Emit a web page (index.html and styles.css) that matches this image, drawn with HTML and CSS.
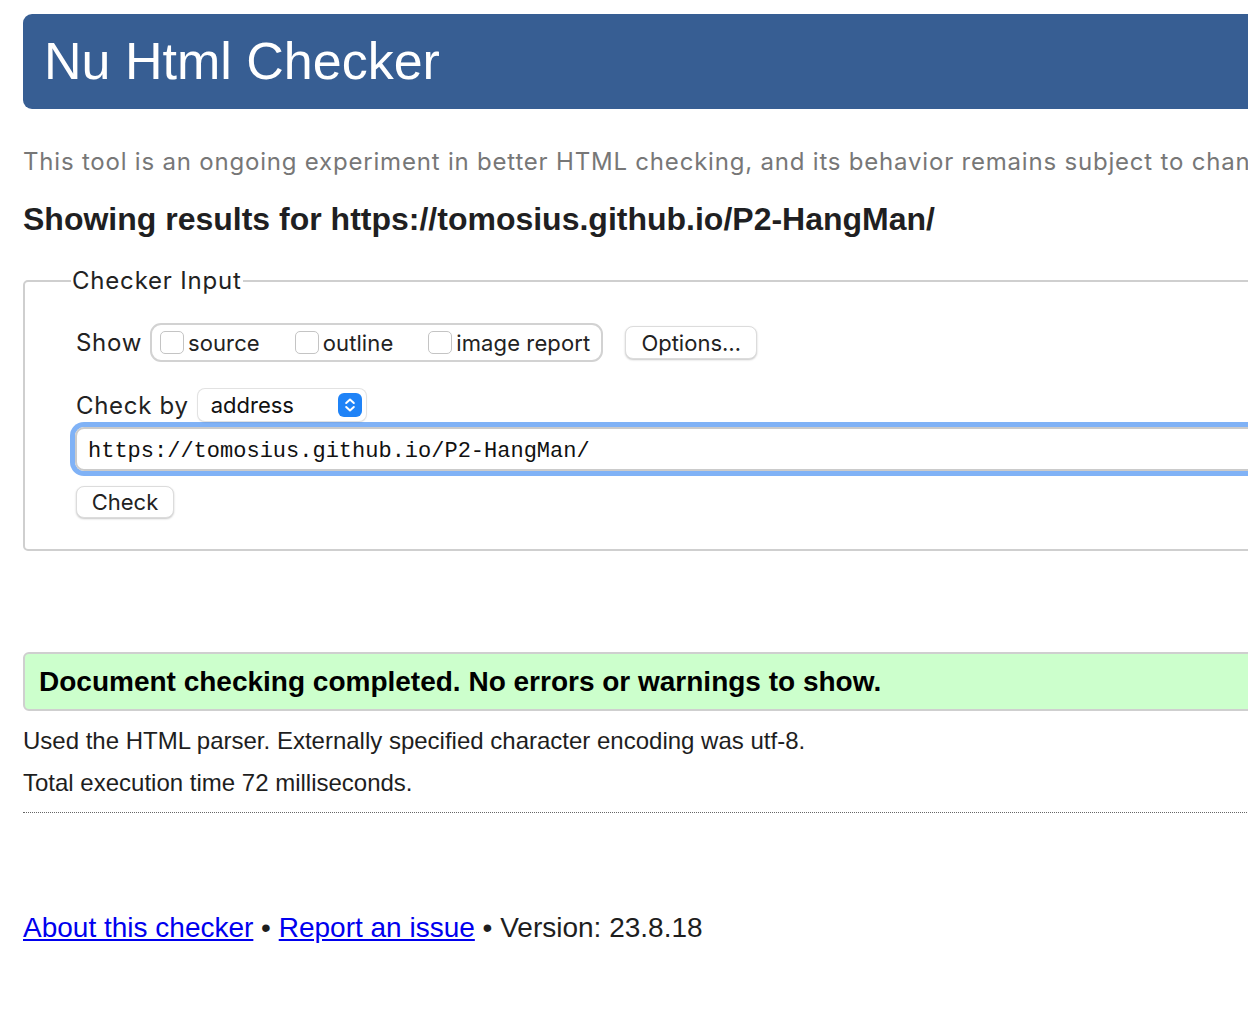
FILE: index.html
```html
<!DOCTYPE html>
<html lang="en">
<head>
<meta charset="utf-8">
<title>Showing results for https://tomosius.github.io/P2-HangMan/ - Nu Html Checker</title>
<link rel="stylesheet" href="styles.css">
</head>
<body>
<div class="page">
  <h1 class="banner">Nu Html Checker</h1>
  <p class="intro">This tool is an ongoing experiment in better HTML checking, and its behavior remains subject to change.</p>
  <h2 class="results-title">Showing results for https://tomosius.github.io/P2-HangMan/</h2>

  <form class="checker">
    <fieldset class="checker-input">
      <legend class="legend">Checker Input</legend>
      <div class="row show-row">
        <span class="label">Show</span>
        <div class="show-group">
          <label class="opt"><span class="box"></span>source</label>
          <label class="opt"><span class="box"></span>outline</label>
          <label class="opt"><span class="box"></span>image report</label>
        </div>
        <button type="button" class="btn options-btn">Options…</button>
      </div>
      <div class="row checkby-row">
        <span class="label">Check by</span>
        <div class="select">
          <span class="select-text">address</span>
          <svg class="stepper" width="24" height="24" viewBox="0 0 24 24" aria-hidden="true">
            <rect x="0" y="0" width="24" height="24" rx="6" fill="#1f83f7"/>
            <path d="M8.2 10 L12 6.6 L15.8 10" fill="none" stroke="#fff" stroke-width="2" stroke-linecap="round" stroke-linejoin="round"/>
            <path d="M8.2 14 L12 17.4 L15.8 14" fill="none" stroke="#fff" stroke-width="2" stroke-linecap="round" stroke-linejoin="round"/>
          </svg>
        </div>
      </div>
      <div class="url-field">https://tomosius.github.io/P2-HangMan/</div>
      <button type="button" class="btn check-btn">Check</button>
    </fieldset>
  </form>

  <div class="success">Document checking completed. No errors or warnings to show.</div>
  <p class="details">Used the HTML parser. Externally specified character encoding was utf-8.</p>
  <p class="details">Total execution time 72 milliseconds.</p>
  <hr class="dotted">
  <p class="footer"><a href="#">About this checker</a> • <a href="#">Report an issue</a> • Version: 23.8.18</p>
</div>
</body>
</html>
```

FILE: styles.css
```css
html {
  overflow: hidden;
  background: #fff;
}
body {
  margin: 0;
  font-family: "Liberation Sans", Arial, sans-serif;
  color: #1e1e1e;
}
.page {
  width: 1700px;
  padding: 14px 0 0 23px;
}
.banner {
  margin: 0;
  height: 95px;
  line-height: 95px;
  padding-left: 21px;
  background: #375e93;
  color: #fff;
  font-weight: normal;
  font-size: 52px;
  border-radius: 9px;
}
.intro {
  margin: 38px 0 0;
  font-family: Inter, "Liberation Sans", sans-serif;
  font-size: 24px;
  letter-spacing: 0.8px;
  line-height: 30px;
  color: #777;
  white-space: nowrap;
}
.results-title {
  margin: 24px 0 0;
  font-size: 32px;
  line-height: 36px;
  font-weight: bold;
  color: #1f1f22;
  white-space: nowrap;
}
.checker {
  margin: 30px 0 0;
}
.checker-input {
  margin: 0;
  padding: 28px 0 31px 51px;
  border: 2px solid #cfcfcf;
  border-radius: 5px;
  font-family: Inter, "Liberation Sans", sans-serif;
  color: #222;
}
.legend {
  margin-left: -5px;
  padding: 0 1px;
  font-size: 24px;
  letter-spacing: 0.8px;
  line-height: 28px;
  color: #222;
}
.row {
  display: flex;
  align-items: center;
}
.label {
  font-size: 24px;
  letter-spacing: 0.7px;
  color: #222;
}
.show-row .label {
  margin-right: 8px;
}
.show-group {
  display: flex;
  align-items: center;
  height: 39px;
  box-sizing: border-box;
  padding: 0 11px 0 8px;
  border: 2px solid #d2d2d2;
  border-radius: 11px;
  gap: 35px;
}
.opt {
  display: flex;
  align-items: center;
  gap: 4px;
  font-size: 22px;
  letter-spacing: 0.1px;
  color: #222;
}
.box {
  width: 24px;
  height: 23px;
  box-sizing: border-box;
  border: 1px solid #c4c4c4;
  border-radius: 5px;
  background: #fff;
}
.btn {
  font-family: Inter, "Liberation Sans", sans-serif;
  font-size: 22px;
  color: #222;
  background: #fff;
  border: 1px solid #dcdcdc;
  border-radius: 8px;
  box-shadow: 0 1px 2px rgba(0, 0, 0, 0.22);
  padding: 0;
}
.options-btn {
  margin-left: 22px;
  width: 132px;
  height: 33px;
}
.checkby-row {
  margin-top: 27px;
}
.checkby-row .label {
  margin-right: 9px;
}
.select {
  display: flex;
  align-items: center;
  justify-content: space-between;
  width: 168px;
  height: 32px;
  box-sizing: border-box;
  padding: 0 4px 0 13px;
  border-radius: 7px;
  background: #fff;
  box-shadow: 0 0 0 1px #e2e2e2, 0 1px 2px rgba(0, 0, 0, 0.2);
  font-size: 22px;
  color: #111;
}
.stepper {
  display: block;
}
.url-field {
  margin: 6px 0 0 -1px;
  height: 44px;
  box-sizing: border-box;
  padding: 5px 0 0 11px;
  border: 2px solid #cbcbcb;
  border-radius: 9px;
  box-shadow: 0 0 0 5px #80b2f6;
  font-family: "Liberation Mono", "DejaVu Sans Mono", monospace;
  font-size: 22px;
  line-height: 35px;
  color: #111;
}
.check-btn {
  display: block;
  margin-top: 15px;
  width: 98px;
  height: 32px;
}
.success {
  margin-top: 101px;
  height: 59px;
  box-sizing: border-box;
  padding-left: 14px;
  border: 2px solid #cfcfcf;
  border-radius: 6px;
  background: #ccffcc;
  font-size: 28px;
  font-weight: bold;
  line-height: 55px;
  color: #000;
}
.details {
  margin: 0;
  font-size: 24px;
  line-height: 42px;
  color: #1e1e1e;
}
.success + .details {
  margin-top: 9px;
}
.dotted {
  margin: 8px 0 0;
  border: 0;
  border-top: 1px dotted #666;
  height: 0;
}
.footer {
  margin: 98px 0 0;
  font-size: 28px;
  line-height: 34px;
  color: #1e1e1e;
}
.footer a {
  color: #0000ee;
  text-decoration: underline;
}
```
